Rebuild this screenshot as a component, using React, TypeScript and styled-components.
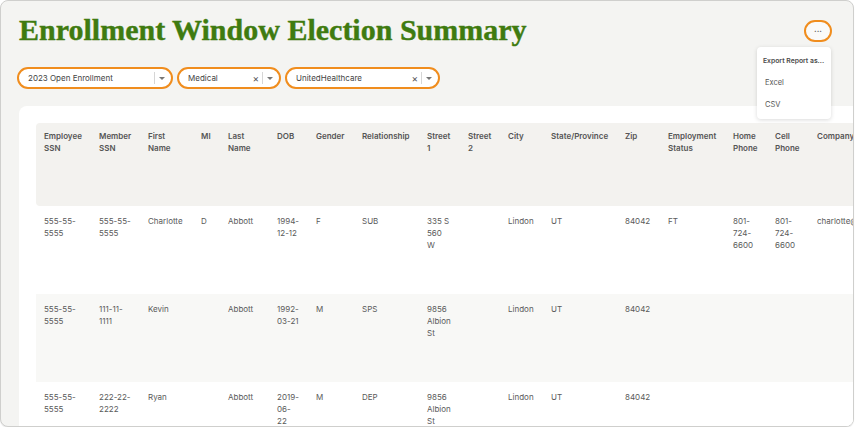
import React from "react";
import styled, { createGlobalStyle } from "styled-components";

const GlobalStyle = createGlobalStyle`
  html, body { margin: 0; padding: 0; background: #ffffff; }
  body { font-family: Inter, "Noto Sans", sans-serif; }
  * { box-sizing: border-box; }
`;

const Frame = styled.div`
  position: relative;
  width: 854px;
  height: 427px;
  border: 1px solid #cfcfcd;
  border-radius: 8px;
  box-shadow: 0 1px 1px rgba(0, 0, 0, 0.08);
  background: #f4f4f2;
  overflow: hidden;
  padding: 11px 0 0 16px;
`;

const HeaderRow = styled.div`
  display: flex;
  justify-content: space-between;
  align-items: flex-start;
  padding-right: 21px;
`;

const Title = styled.h1`
  margin: 0 0 0 2px;
  font-family: "Liberation Serif", "Times New Roman", serif;
  font-weight: 700;
  font-size: 30px;
  line-height: 36px;
  color: #3f7b10;
  -webkit-text-stroke: 0.4px #3f7b10;
`;

const MoreWrap = styled.div`
  position: relative;
  margin-top: 8px;
`;

const MoreButton = styled.button`
  width: 28px;
  height: 22px;
  border: 2px solid #f08d1e;
  border-radius: 11px;
  background: #fafaf9;
  display: flex;
  align-items: center;
  justify-content: center;
  padding: 0 0 1px 0;
  color: #555;
  font-family: Inter, sans-serif;
  font-size: 8px;
  font-weight: 700;
  line-height: 1;
`;

const Menu = styled.div`
  position: absolute;
  top: 27px;
  right: 1px;
  width: 74px;
  height: 72px;
  background: #ffffff;
  border-radius: 4px;
  box-shadow: 0 1px 4px rgba(0, 0, 0, 0.15);
  padding: 8px 0 0 6px;
  z-index: 5;
`;

const MenuLabel = styled.div`
  font-size: 6.8px;
  font-weight: 600;
  color: #4a4a4a;
  line-height: 12px;
  white-space: nowrap;
`;

const MenuItem = styled.div`
  font-size: 7.5px;
  color: #555;
  line-height: 12px;
  padding-left: 2px;
  margin-top: 10px;
`;

const Filters = styled.div`
  display: flex;
  gap: 4px;
  margin-top: 19px;
`;

const Pill = styled.div<{ $w: number }>`
  width: ${(p) => p.$w}px;
  height: 22px;
  border: 2px solid #f08d1e;
  border-radius: 11px;
  background: #ffffff;
  display: flex;
  align-items: center;
  padding: 0 5px 0 9px;
`;

const PillText = styled.span`
  flex: 1;
  font-size: 8px;
  color: #444;
  white-space: nowrap;
`;

const Clear = styled.span`
  font-size: 10px;
  color: #555;
  line-height: 1;
  margin-right: 3px;
`;

const Sep = styled.span`
  width: 1px;
  height: 12px;
  background: #d6d6d6;
  margin-right: 4px;
`;

const Caret = styled.span`
  width: 0;
  height: 0;
  border-left: 3px solid transparent;
  border-right: 3px solid transparent;
  border-top: 3.5px solid #777;
  margin-right: 1px;
`;

const Card = styled.div`
  margin: 17px 0 0 2px;
  width: 900px;
  height: 400px;
  background: #ffffff;
  border-radius: 8px 0 0 0;
  padding: 17px 0 0 17px;
`;

const cols = "55px 49px 53px 27px 49px 39px 46px 65px 41px 40px 43px 74px 43px 65px 42px 42px 120px";

const Grid = styled.div<{ $bg: string; $h: number; $head?: boolean }>`
  display: grid;
  grid-template-columns: ${cols};
  height: ${(p) => p.$h}px;
  background: ${(p) => p.$bg};
  border-radius: ${(p) => (p.$head ? "4px 0 0 4px" : "0")};
  padding-top: ${(p) => (p.$head ? 7 : 9)}px;
`;

const Cell = styled.div<{ $head?: boolean }>`
  padding: 0 4px 0 8px;
  font-size: 8px;
  line-height: 12px;
  font-weight: ${(p) => (p.$head ? 600 : 400)};
  color: ${(p) => (p.$head ? "#555" : "#5a5a5a")};
  white-space: pre-line;
`;

const headers = [
  "Employee\nSSN", "Member\nSSN", "First\nName", "MI", "Last\nName", "DOB", "Gender",
  "Relationship", "Street\n1", "Street\n2", "City", "State/Province", "Zip",
  "Employment\nStatus", "Home\nPhone", "Cell\nPhone", "Company",
];

const rows: string[][] = [
  ["555-55-\n5555", "555-55-\n5555", "Charlotte", "D", "Abbott", "1994-\n12-12", "F", "SUB",
    "335 S\n560\nW", "", "Lindon", "UT", "84042", "FT", "801-\n724-\n6600", "801-\n724-\n6600",
    "charlotte@example.com"],
  ["555-55-\n5555", "111-11-\n1111", "Kevin", "", "Abbott", "1992-\n03-21", "M", "SPS",
    "9856\nAlbion\nSt", "", "Lindon", "UT", "84042", "", "", "", ""],
  ["555-55-\n5555", "222-22-\n2222", "Ryan", "", "Abbott", "2019-\n06-\n22", "M", "DEP",
    "9856\nAlbion\nSt", "", "Lindon", "UT", "84042", "", "", "", ""],
];

const filters = [
  { label: "2023 Open Enrollment", w: 156, clear: false },
  { label: "Medical", w: 104, clear: true },
  { label: "UnitedHealthcare", w: 155, clear: true },
];

export default function App() {
  return (
    <>
      <GlobalStyle />
      <Frame>
        <HeaderRow>
          <Title>Enrollment Window Election Summary</Title>
          <MoreWrap>
            <MoreButton>···</MoreButton>
            <Menu>
              <MenuLabel>Export Report as...</MenuLabel>
              <MenuItem>Excel</MenuItem>
              <MenuItem>CSV</MenuItem>
            </Menu>
          </MoreWrap>
        </HeaderRow>
        <Filters>
          {filters.map((f) => (
            <Pill key={f.label} $w={f.w}>
              <PillText>{f.label}</PillText>
              {f.clear && <Clear>×</Clear>}
              <Sep />
              <Caret />
            </Pill>
          ))}
        </Filters>
        <Card>
          <Grid $bg="#f3f2ef" $h={83} $head>
            {headers.map((h) => (
              <Cell key={h} $head>{h}</Cell>
            ))}
          </Grid>
          {rows.map((r, i) => (
            <Grid key={i} $bg={i % 2 === 1 ? "#f8f8f6" : "#ffffff"} $h={88}>
              {r.map((c, j) => (
                <Cell key={j}>{c}</Cell>
              ))}
            </Grid>
          ))}
        </Card>
      </Frame>
    </>
  );
}
